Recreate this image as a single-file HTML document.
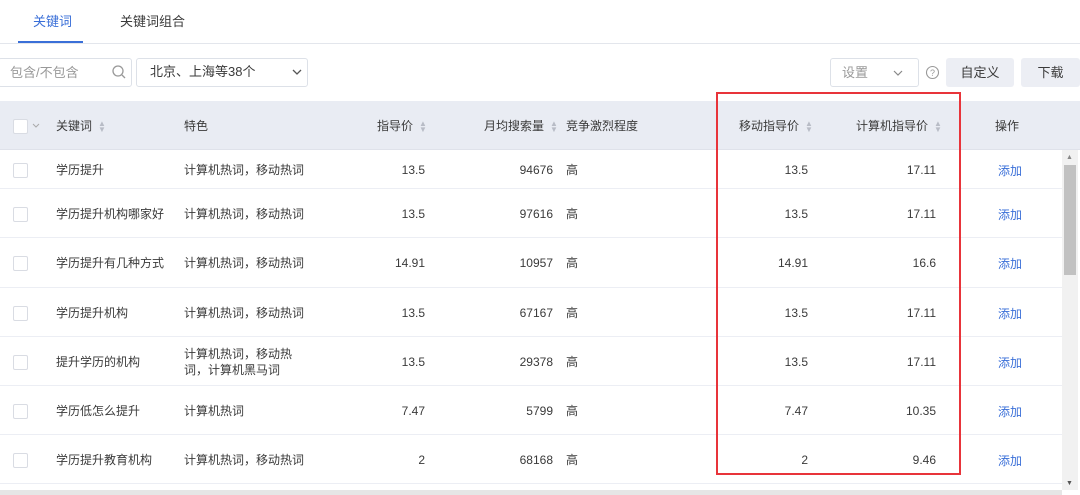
<!DOCTYPE html>
<html><head><meta charset="utf-8"><style>
*{margin:0;padding:0;box-sizing:border-box}
body{width:1080px;height:495px;overflow:hidden;background:#fff;font-family:"Liberation Sans","Noto Sans CJK SC",sans-serif;font-size:12px;color:#3a3a3a;position:relative}
.a{position:absolute;white-space:nowrap;line-height:16px}
.tab{top:14px;font-size:13px}
.cb{width:15px;height:15px;border:1px solid #d9dce3;border-radius:2px;background:#fff}
.row{position:absolute;left:0;width:1062px;border-bottom:1px solid #eceef4}
.r{text-align:right}
.sort{display:inline-block;width:7px;margin-left:6px;vertical-align:middle;color:#b8bcc6;font-size:8px;line-height:6px}
.blue{color:#3a6fd8}
</style></head><body>
<div class="a tab" style="left:33px;color:#3a6fd8">关键词</div>
<div class="a tab" style="left:120px">关键词组合</div>
<div class="a" style="left:0;top:43px;width:1080px;height:1px;background:#e3e6ec"></div>
<div class="a" style="left:18px;top:41px;width:65px;height:2px;background:#3a6fd8"></div>

<div class="a" style="left:-2px;top:58px;width:134px;height:29px;border:1px solid #dde1e8;border-radius:3px"></div>
<div class="a" style="left:10px;top:65px;color:#999;font-size:13px">包含/不包含</div>
<svg class="a" style="left:111px;top:64px" width="16" height="16"><circle cx="7" cy="7" r="5" fill="none" stroke="#999" stroke-width="1.3"/><line x1="11" y1="11" x2="14" y2="14" stroke="#999" stroke-width="1.3"/></svg>
<div class="a" style="left:136px;top:58px;width:172px;height:29px;border:1px solid #dde1e8;border-radius:3px"></div>
<div class="a" style="left:150px;top:64px;font-size:13px">北京、上海等38个</div>
<svg class="a" style="left:292px;top:68px" width="10" height="8"><path d="M1 2L5 6L9 2" fill="none" stroke="#555" stroke-width="1.3"/></svg>

<div class="a" style="left:830px;top:58px;width:89px;height:29px;border:1px solid #dde1e8;border-radius:3px"></div>
<div class="a" style="left:842px;top:65px;color:#999;font-size:13px">设置</div>
<svg class="a" style="left:893px;top:69px" width="10" height="8"><path d="M1 2L5 6L9 2" fill="none" stroke="#888" stroke-width="1.2"/></svg>
<svg class="a" style="left:925px;top:65px" width="15" height="15"><circle cx="7.5" cy="7.5" r="6" fill="none" stroke="#999" stroke-width="1.1"/><text x="7.5" y="11" font-size="9" text-anchor="middle" fill="#999">?</text></svg>
<div class="a" style="left:946px;top:58px;width:68px;height:29px;background:#eceef4;border-radius:3px;text-align:center;line-height:29px;font-size:13px">自定义</div>
<div class="a" style="left:1021px;top:58px;width:59px;height:29px;background:#eceef4;border-radius:3px;text-align:center;line-height:29px;font-size:13px">下载</div>

<div class="a" style="left:0;top:101px;width:1080px;height:49px;background:#e9ecf3;border-bottom:1px solid #dfe2ea"></div>
<div class="a cb" style="left:13px;top:119px"></div>
<svg class="a" style="left:32px;top:123px" width="8" height="6"><path d="M1 1L4 4L7 1" fill="none" stroke="#aaa" stroke-width="1"/></svg>
<div class="a" style="left:56px;top:118px">关键词<span class="sort">▲<br>▼</span></div>
<div class="a" style="left:184px;top:118px">特色</div>
<div class="a" style="left:377px;top:118px">指导价<span class="sort">▲<br>▼</span></div>
<div class="a" style="left:484px;top:118px">月均搜索量<span class="sort">▲<br>▼</span></div>
<div class="a" style="left:566px;top:118px">竞争激烈程度</div>
<div class="a" style="left:739px;top:118px">移动指导价<span class="sort">▲<br>▼</span></div>
<div class="a" style="left:856px;top:118px">计算机指导价<span class="sort">▲<br>▼</span></div>
<div class="a" style="left:995px;top:118px">操作</div>

<div id="rows"></div>
<script>
var d=[["学历提升","计算机热词，移动热词","13.5","94676","13.5","17.11",150,39],
["学历提升机构哪家好","计算机热词，移动热词","13.5","97616","13.5","17.11",189,49],
["学历提升有几种方式","计算机热词，移动热词","14.91","10957","14.91","16.6",238,50],
["学历提升机构","计算机热词，移动热词","13.5","67167","13.5","17.11",288,49],
["提升学历的机构","计算机热词，移动热<br>词，计算机黑马词","13.5","29378","13.5","17.11",337,49],
["学历低怎么提升","计算机热词","7.47","5799","7.47","10.35",386,49],
["学历提升教育机构","计算机热词，移动热词","2","68168","2","9.46",435,49]];
var h="";d.forEach(function(r){var t=r[6],c=t+r[7]/2;
h+='<div class="row" style="top:'+t+'px;height:'+r[7]+'px"></div>';
h+='<div class="a cb" style="left:13px;top:'+(c-7)+'px"></div>';
h+='<div class="a" style="left:56px;top:'+(c-8)+'px">'+r[0]+'</div>';
var two=r[1].indexOf("<br>")>0;
h+='<div class="a" style="left:184px;top:'+(c-(two?16:8))+'px">'+r[1]+'</div>';
h+='<div class="a r" style="right:655px;top:'+(c-8)+'px">'+r[2]+'</div>';
h+='<div class="a r" style="right:527px;top:'+(c-8)+'px">'+r[3]+'</div>';
h+='<div class="a" style="left:566px;top:'+(c-8)+'px">高</div>';
h+='<div class="a r" style="right:272px;top:'+(c-8)+'px">'+r[4]+'</div>';
h+='<div class="a r" style="right:144px;top:'+(c-8)+'px">'+r[5]+'</div>';
h+='<div class="a blue" style="left:998px;top:'+(c-7)+'px">添加</div>';});
document.getElementById("rows").innerHTML=h;
</script>
<div class="a" style="left:1062px;top:150px;width:16px;height:340px;background:#f1f1f1"></div>
<div class="a" style="left:1064px;top:165px;width:12px;height:110px;background:#c1c1c1"></div>
<div class="a" style="left:1066px;top:150px;color:#888;font-size:7px">▲</div>
<div class="a" style="left:1066px;top:476px;color:#555;font-size:7px">▼</div>
<div class="a" style="left:0;top:490px;width:1062px;height:5px;background:#e6e6e6"></div>
<div class="a" style="left:716px;top:92px;width:245px;height:383px;border:2px solid #e8343a"></div>
</body></html>
